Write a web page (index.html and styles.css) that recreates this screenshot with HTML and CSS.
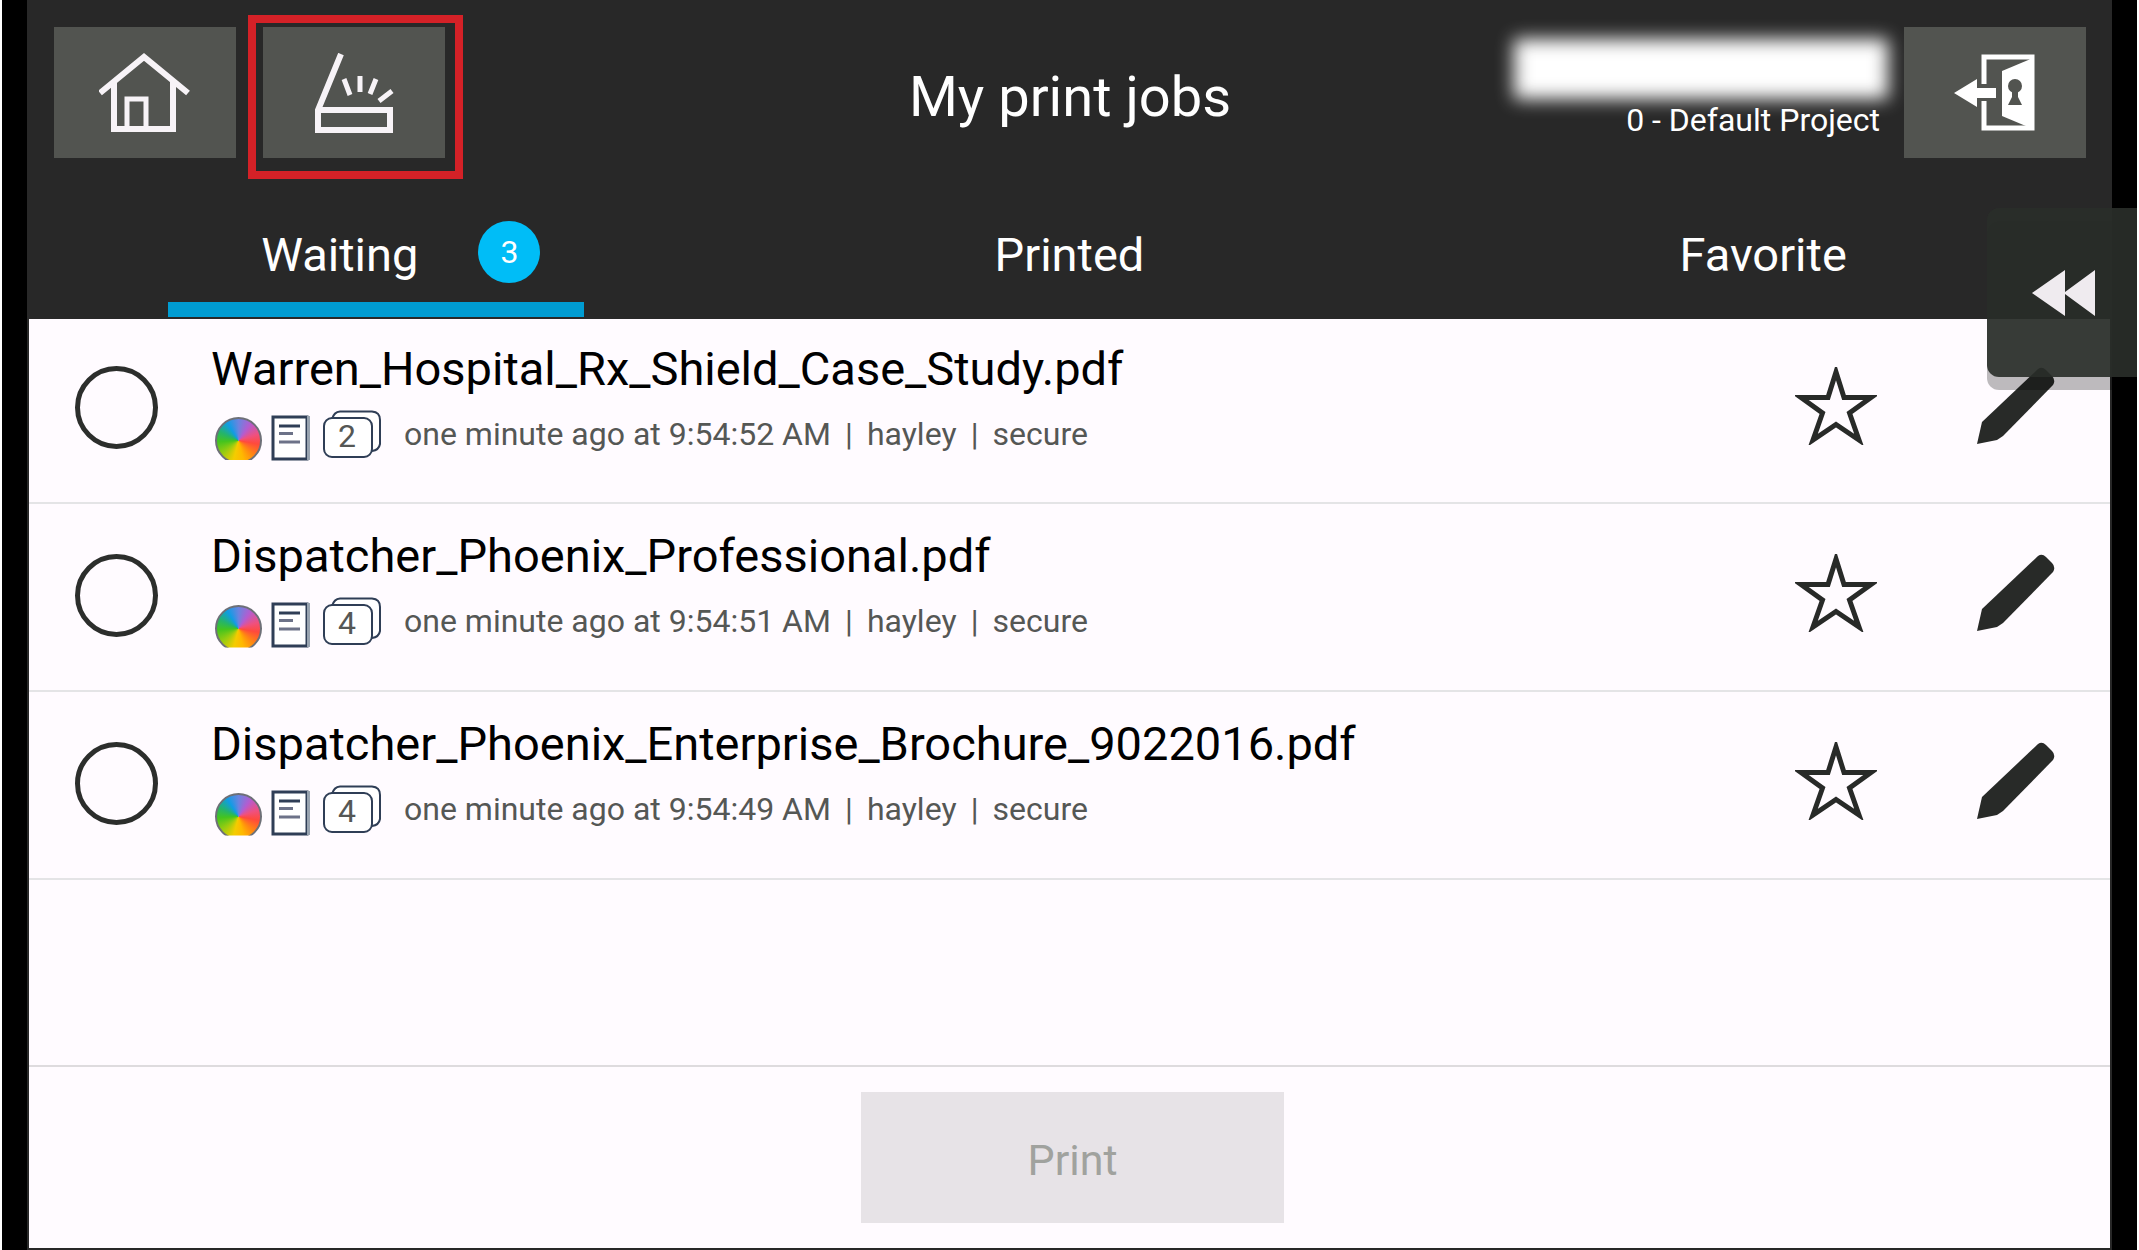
FILE: index.html
```html
<!DOCTYPE html>
<html lang="en">
<head>
<meta charset="utf-8">
<title>My print jobs</title>
<link rel="stylesheet" href="styles.css">
</head>
<body>
<svg class="sprite" aria-hidden="true">
  <symbol id="star" viewBox="0 0 82 78">
    <path d="M41 5 L49 30.500 H76 L54.500 46 L64 73 L41 57.500 L18 73 L27.500 46 L6 30.500 H33 Z" fill="none" stroke="#282a28" stroke-width="5"/>
  </symbol>
  <symbol id="pencil" viewBox="0 0 78 78">
    <path d="M0 77 L5 55 L61 2 Q65 -1 69 3 L75 9 Q79 13 76 18 L26 69 L20 73 Z" fill="#282a28"/>
  </symbol>
  <symbol id="page" viewBox="0 0 40 46">
    <path d="M3 2 H37 V44 H3 Z" fill="#fff" stroke="#2f3e56" stroke-width="3"/>
    <path d="M38.500 1 V45" stroke="#98a3af" stroke-width="3"/>
    <path d="M9 11 H30" stroke="#2f3e56" stroke-width="3"/>
    <path d="M9 18.500 H23 M9 27 H30" stroke="#6c7288" stroke-width="3"/>
  </symbol>
  <symbol id="stack" viewBox="0 0 58 48">
    <path d="M9 9 Q11 2 17 1.500 H49 Q57 2 57 10 V34 Q56 40 49 41" fill="#fff" stroke="#2f3e56" stroke-width="2"/>
    <rect x="1" y="8" width="48" height="39" rx="8" fill="#fff" stroke="#2f3e56" stroke-width="2"/>
  </symbol>
</svg>

<div class="frame">
  <div class="panel">
    <header class="header">
      <div class="topbar">
        <div class="actions">
          <button class="tile" type="button" aria-label="Home">
            <svg width="92" height="80" viewBox="0 0 92 80" fill="none" stroke="#f7f3f7" stroke-width="6">
              <path d="M1 40 L45 4 L89 40"/>
              <path d="M15 29 V76 H74 V29"/>
              <path d="M28 76 V46 H47 V76" stroke-width="5"/>
            </svg>
          </button>
          <button class="tile tile-marked" type="button" aria-label="Scan">
            <svg width="80" height="80" viewBox="0 0 80 80" fill="none" stroke="#f7f3f7" stroke-width="6">
              <path d="M27 1 L4 57 V77 H76 V57 H4"/>
              <path d="M30 26 L36 42 M46 23 V39 M62 26 L56 41 M78 38 L65 48" stroke-width="5"/>
            </svg>
          </button>
        </div>
        <h1 class="title">My print jobs</h1>
        <div class="account">
          <div class="user">
            <div class="user-name"></div>
            <div class="user-project">0 - Default Project</div>
          </div>
          <button class="tile" type="button" aria-label="Log out">
            <svg width="82" height="78" viewBox="0 0 82 78">
              <path d="M30 30 V3 H78 V74 H30 V47" fill="none" stroke="#fff" stroke-width="5"/>
              <path d="M79 4 L48 17 V62 L79 75 Z" fill="#fff"/>
              <path d="M0 39 L23 25 V34 H42 V44 H23 V53 Z" fill="#fff"/>
              <circle cx="61" cy="32" r="7" fill="#525450"/>
              <path d="M58 36 H64 L64 43 L68 51 H54 L58 43 Z" fill="#525450"/>
            </svg>
          </button>
        </div>
      </div>
      <nav class="tabs">
        <button class="tab tab-active" type="button">Waiting<span class="badge">3</span></button>
        <button class="tab" type="button">Printed</button>
        <button class="tab" type="button">Favorite</button>
      </nav>
    </header>

    <main class="body">
      <ul class="jobs">
        <li class="job">
          <input class="pick" type="checkbox" id="job1">
          <div class="info">
            <label class="name" for="job1">Warren_Hospital_Rx_Shield_Case_Study.pdf</label>
            <div class="meta">
              <span class="wheel"></span>
              <svg class="page"><use href="#page"/></svg>
              <span class="copies"><svg><use href="#stack"/></svg><span>2</span></span>
              <span class="when">one minute ago at 9:54:52 AM</span><span class="bar">|</span><span>hayley</span><span class="bar">|</span><span>secure</span>
            </div>
          </div>
          <button class="icon" type="button" aria-label="Favorite"><svg width="82" height="78"><use href="#star"/></svg></button>
          <button class="icon" type="button" aria-label="Edit"><svg width="78" height="78"><use href="#pencil"/></svg></button>
        </li>
        <li class="job">
          <input class="pick" type="checkbox" id="job2">
          <div class="info">
            <label class="name" for="job2">Dispatcher_Phoenix_Professional.pdf</label>
            <div class="meta">
              <span class="wheel"></span>
              <svg class="page"><use href="#page"/></svg>
              <span class="copies"><svg><use href="#stack"/></svg><span>4</span></span>
              <span class="when">one minute ago at 9:54:51 AM</span><span class="bar">|</span><span>hayley</span><span class="bar">|</span><span>secure</span>
            </div>
          </div>
          <button class="icon" type="button" aria-label="Favorite"><svg width="82" height="78"><use href="#star"/></svg></button>
          <button class="icon" type="button" aria-label="Edit"><svg width="78" height="78"><use href="#pencil"/></svg></button>
        </li>
        <li class="job">
          <input class="pick" type="checkbox" id="job3">
          <div class="info">
            <label class="name" for="job3">Dispatcher_Phoenix_Enterprise_Brochure_9022016.pdf</label>
            <div class="meta">
              <span class="wheel"></span>
              <svg class="page"><use href="#page"/></svg>
              <span class="copies"><svg><use href="#stack"/></svg><span>4</span></span>
              <span class="when">one minute ago at 9:54:49 AM</span><span class="bar">|</span><span>hayley</span><span class="bar">|</span><span>secure</span>
            </div>
          </div>
          <button class="icon" type="button" aria-label="Favorite"><svg width="82" height="78"><use href="#star"/></svg></button>
          <button class="icon" type="button" aria-label="Edit"><svg width="78" height="78"><use href="#pencil"/></svg></button>
        </li>
      </ul>
      <footer class="footer">
        <button class="print" type="button" disabled>Print</button>
      </footer>
    </main>
  </div>
  <button class="drawer" type="button" aria-label="Open side panel">
    <svg width="64" height="46" viewBox="0 0 64 46"><path d="M0 23 L33 0 V22 L63 0 V46 L33 24 V46 Z" fill="#efebef"/></svg>
  </button>
</div>
</body>
</html>
```
FILE: styles.css
```css
* {
  box-sizing: border-box;
}

body {
  margin: 0;
  padding: 0 2px;
  background: #fff;
  font-family: Roboto, "Liberation Sans", sans-serif;
}

button {
  margin: 0;
  padding: 0;
  border: 0;
  background: none;
  color: inherit;
  font: inherit;
}

svg {
  display: block;
}

.sprite {
  position: absolute;
  width: 0;
  height: 0;
}

.frame {
  position: relative;
  min-height: 100vh;
  display: flex;
  padding: 0 25px;
  background: #000;
}

.panel {
  flex: 1;
  display: flex;
  flex-direction: column;
  padding: 0 2px 2px;
  background: #282828;
}

/* Header */

.header {
  position: relative;
  background: #282828;
  box-shadow: 0 2px 0 #282828;
  color: #fff;
}

.topbar {
  display: grid;
  grid-template-columns: 1fr auto 1fr;
  align-items: center;
  padding: 27px 24px 0 25px;
}

.actions {
  display: flex;
  gap: 27px;
}

.tile {
  position: relative;
  display: flex;
  align-items: center;
  justify-content: center;
  width: 182px;
  height: 131px;
  background: #525450;
}

/* Callout frame around the scan button */
.tile-marked::after {
  content: "";
  position: absolute;
  inset: -12px -18px -21px -15px;
  border: 8px solid #d42127;
}

.title {
  margin: 0;
  padding-top: 8px;
  font-size: 56px;
  font-weight: 400;
  line-height: 66px;
}

.account {
  display: flex;
  justify-content: flex-end;
  gap: 24px;
}

.user {
  display: flex;
  flex-direction: column;
  align-items: flex-end;
  padding-top: 12px;
}

.user-name {
  width: 374px;
  height: 60px;
  margin-right: -8px;
  background: #fff;
  filter: blur(9px);
}

.user-project {
  position: relative;
  font-size: 32px;
  line-height: 42px;
}

.tabs {
  display: grid;
  grid-template-columns: repeat(3, 1fr);
  padding-top: 34px;
}

.tab {
  position: relative;
  display: flex;
  align-items: center;
  justify-content: center;
  height: 125px;
  font-size: 47px;
  line-height: 56px;
}

.tab-active {
  padding-left: 50px;
}

.tab-active::after {
  content: "";
  position: absolute;
  left: 20%;
  right: 20%;
  bottom: 0;
  height: 15px;
  background: #009cd2;
}

.badge {
  width: 62px;
  height: 62px;
  margin: 0 0 6px 60px;
  border-radius: 50%;
  background: #00bdf7;
  font-size: 32px;
  line-height: 62px;
  text-align: center;
}

/* Job list */

.body {
  flex: 1;
  display: flex;
  flex-direction: column;
  background: #fffbff;
}

.jobs {
  flex: 1;
  margin: 0;
  padding: 0;
  list-style: none;
}

.job {
  display: flex;
  align-items: center;
  height: 188px;
  padding: 0 55px 4px 46px;
  border-bottom: 2px solid #e4e4e6;
}

.job:first-child {
  height: 187px;
}

.pick {
  appearance: none;
  flex: none;
  width: 83px;
  height: 83px;
  margin: 0 53px 0 0;
  border: 5px solid #2c2e2c;
  border-radius: 50%;
}

.info {
  flex: 1;
  min-width: 0;
  padding-bottom: 10px;
}

.name {
  display: block;
  margin-bottom: 8px;
  color: #000;
  font-size: 47px;
  line-height: 54px;
}

.meta {
  display: flex;
  align-items: center;
  height: 60px;
  padding-left: 4px;
  color: #555755;
  font-size: 32px;
  line-height: 44px;
}

.wheel {
  width: 47px;
  height: 47px;
  margin: 14px 8px 0 0;
  border: 2px solid #6e7078;
  border-radius: 50%;
  background: conic-gradient(#6a84e0, #b45cd0 10%, #f0507e 20%, #ff4a3c 28%, #ff8a10 38%, #ffb800 46%, #f4cc00 54%, #9acc10 64%, #44c41e 74%, #24b46c 82%, #109ce4 91%, #6a84e0);
  clip-path: inset(0 0 4px 0);
}

.page {
  width: 40px;
  height: 46px;
  margin: 8px 13px 0 0;
}

.copies {
  display: grid;
  width: 58px;
  height: 48px;
  margin-right: 23px;
}

.copies svg,
.copies span {
  grid-area: 1 / 1;
  width: 58px;
  height: 48px;
}

.copies span {
  padding: 6px 10px 0 0;
  font-size: 32px;
  line-height: 40px;
  text-align: center;
}

.bar {
  width: 36px;
  text-align: center;
}

.icon {
  flex: none;
  margin: 0 0 4px 100px;
}

/* Footer */

.footer {
  display: flex;
  justify-content: center;
  padding: 25px 0 25px 6px;
  border-top: 2px solid #dedbde;
}

.print {
  width: 423px;
  height: 131px;
  padding-top: 4px;
  background: #e7e3e7;
  color: #a0a29e;
  font-size: 43px;
}

/* Side drawer handle, floating above the panel */

.drawer {
  position: absolute;
  top: 208px;
  right: 0;
  display: flex;
  align-items: center;
  justify-content: flex-end;
  width: 150px;
  height: 169px;
  padding: 0 41px 0 0;
}

.drawer::before,
.drawer::after {
  content: "";
  position: absolute;
  inset: 0;
  border-radius: 12px 0 0 12px;
  background: rgba(42, 46, 42, 0.91);
}

.drawer::before {
  top: 13px;
  bottom: -13px;
  background: rgba(0, 0, 0, 0.26);
}

.drawer svg {
  position: relative;
  z-index: 1;
}
```
